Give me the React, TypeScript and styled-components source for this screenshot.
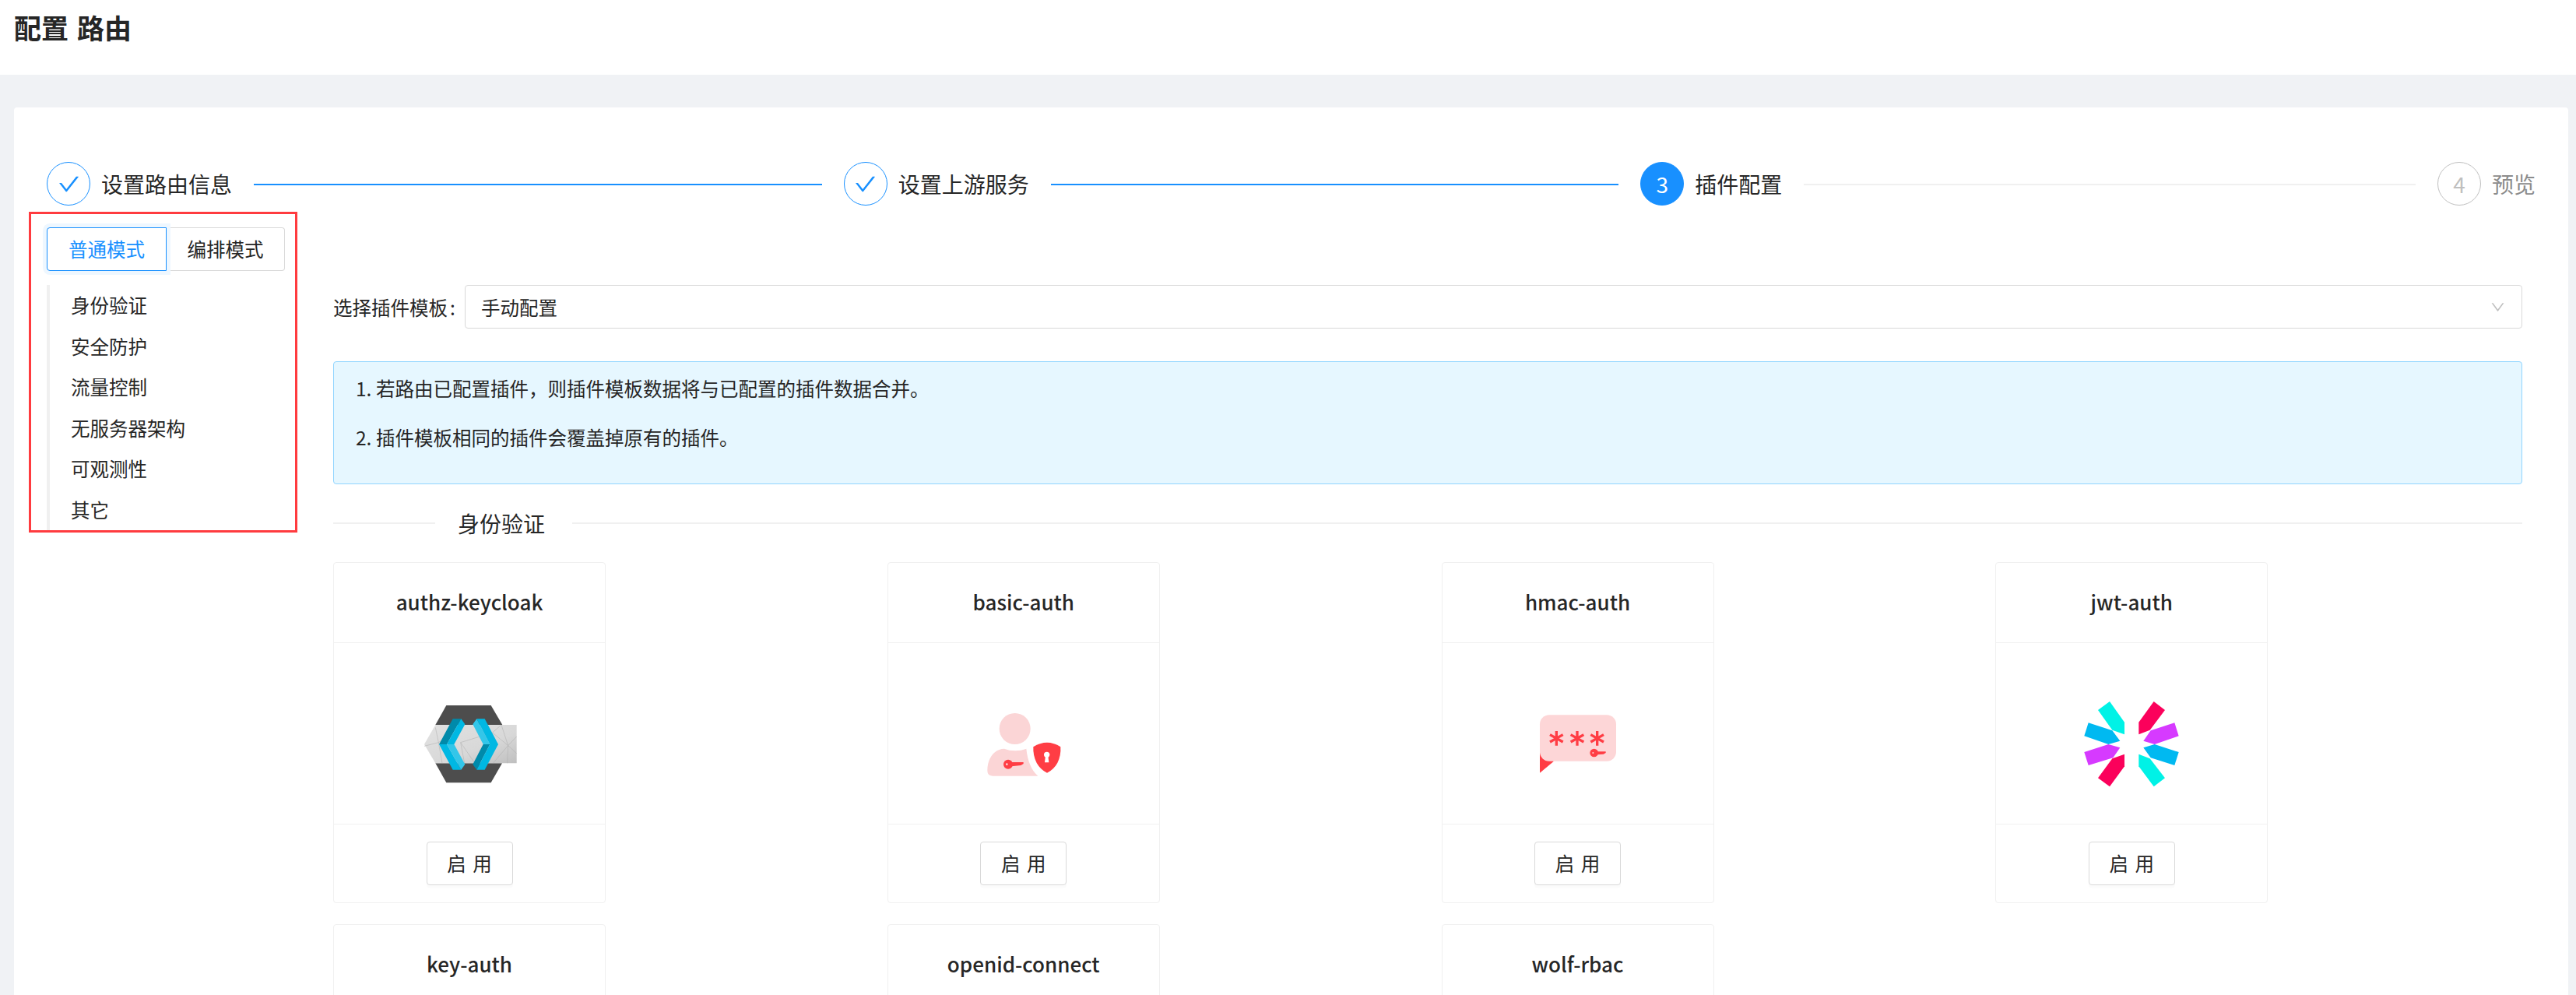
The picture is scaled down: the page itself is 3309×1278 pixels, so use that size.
import React from "react";
import styled, { createGlobalStyle } from "styled-components";

const Global = createGlobalStyle`
  html, body {
    margin: 0;
    height: 1278px;
    overflow: hidden;
    background: #f0f2f5;
  }
  * { box-sizing: border-box; }
  body {
    font-family: "Noto Sans CJK SC", "Noto Sans", sans-serif;
    font-size: 24.5px;
    color: #262626;
  }
`;

const AntCheck = () => (
  <svg width="31" height="31" viewBox="0 0 1024 1024" fill="#1890ff">
    <path d="M912 190h-69.9c-9.8 0-19.1 4.5-25.1 12.2L404.7 724.5 207 474a32 32 0 0 0-25.1-12.2H112c-6.7 0-10.4 7.7-6.3 12.9l273.9 347c12.8 16.2 37.4 16.2 50.3 0l488.4-618.9c4.1-5.1.4-12.8-6.3-12.8z" />
  </svg>
);

const AntDown = () => (
  <svg width="21" height="21" viewBox="0 0 1024 1024" fill="#bfbfbf">
    <path d="M884 256h-75c-5.1 0-9.9 2.5-12.9 6.6L512 654.2 227.9 262.6c-3-4.1-7.8-6.6-12.9-6.6h-75c-6.5 0-10.3 7.4-6.5 12.7l352.6 486.1c12.8 17.6 39 17.6 51.7 0l352.6-486.1c3.9-5.3.1-12.7-6.4-12.7z" />
  </svg>
);

const KeycloakIcon = () => (
  <svg width="200" height="140" viewBox="9 0 600 420">
    <defs>
      <linearGradient id="kcMid" x1="0" y1="0" x2="1" y2="1">
        <stop offset="0" stopColor="#e2e2e2" />
        <stop offset="0.6" stopColor="#d8d8d8" />
        <stop offset="1" stopColor="#bfbfbf" />
      </linearGradient>
    </defs>
    <polygon points="220,75 392,75 436,150 178,150" fill="#4d4d4d" />
    <polygon points="178,298 435,298 392,373 220,373" fill="#4d4d4d" />
    <polygon points="178,150 491,150 491,298 178,298 135,225" fill="url(#kcMid)" />
    <g stroke="#adadad" strokeWidth="1.5" fill="none">
      <path d="M135 232 L190 218 L178 160 M190 218 L204 298 M190 218 L230 190" />
      <path d="M275 218 L398 180 L432 150 M275 218 L330 298 M275 218 L290 298 M398 180 L458 230" />
      <path d="M432 150 L458 230 L491 195 M458 230 L491 260 M458 230 L455 298 M458 230 L400 298" />
    </g>
    <polygon points="192,225 245,127 277,127 222,225" fill="#008aaa" />
    <polygon points="277,127 292,148 250,225 222,225" fill="#00b8e3" />
    <polygon points="192,225 222,225 277,323 245,323" fill="#00b8e3" />
    <polygon points="222,225 250,225 292,302 277,323" fill="#33c6e9" />
    <polygon points="322,148 337,127 388,225 362,225" fill="#33c6e9" />
    <polygon points="337,127 368,127 420,225 388,225" fill="#00b8e3" />
    <polygon points="322,302 362,225 388,225 337,323" fill="#008aaa" />
    <polygon points="337,323 388,225 420,225 368,323" fill="#00b8e3" />
  </svg>
);

const BasicAuthIcon = () => (
  <svg width="200" height="140" viewBox="-75 -30 600 420">
    <circle cx="191" cy="135" r="60" fill="#fbd5d6" />
    <path d="M85 295 C85 245 115 212 150 212 C175 222 210 222 235 212 C240 260 255 295 280 317 L105 317 Q85 317 85 295 Z" fill="#fbd5d6" />
    <circle cx="165" cy="272" r="18" fill="#ff3d44" />
    <circle cx="160" cy="272" r="4" fill="#fbd5d6" />
    <polygon points="178,264 224,264 224,270 214,276 178,280" fill="#ff3d44" />
    <path d="M262 205 Q315 172 367 205 C370 250 350 290 315 305 C280 290 260 250 262 205 Z" fill="#ff3d44" />
    <circle cx="314" cy="235" r="11" fill="#fff" />
    <polygon points="309,240 319,240 322,265 306,265" fill="#fff" />
  </svg>
);

const HmacIcon = () => (
  <svg width="200" height="140" viewBox="-72 -30 600 420">
    <polygon points="81,225 81,305 135,260" fill="#ff3d44" />
    <rect x="81" y="82" width="294" height="178" rx="36" fill="#fdd6d7" />
    <g stroke="#ff3d44" strokeWidth="10">
      {[145, 225, 302].map((cx) => (
        <path
          key={cx}
          d={`M${cx} 144 V200 M${cx - 25} 158 L${cx + 25} 186 M${cx + 25} 158 L${cx - 25} 186`}
        />
      ))}
    </g>
    <circle cx="290" cy="228" r="16" fill="#ff3d44" />
    <circle cx="286" cy="228" r="3" fill="#fdd6d7" />
    <polygon points="300,223 335,223 335,228 326,233 300,235" fill="#ff3d44" />
  </svg>
);

const JwtIcon = () => (
  <svg width="200" height="140" viewBox="-66 0 600 420">
    <polygon points="105,93 150,60 207,140 207,187 160,170" fill="#00f2e6" />
    <polygon points="320,60 363,93 305,170 262,187 262,140" fill="#fb015b" />
    <polygon points="68,142 160,172 190,212 145,225 52,193" fill="#00b9f1" />
    <polygon points="400,142 416,193 323,225 280,212 308,172" fill="#d63aff" />
    <polygon points="52,255 145,225 190,238 163,277 68,306" fill="#d63aff" />
    <polygon points="323,225 416,255 400,306 308,277 280,238" fill="#00b9f1" />
    <polygon points="207,263 207,310 150,388 105,355 160,280" fill="#fb015b" />
    <polygon points="262,263 305,280 363,355 320,388 262,310" fill="#00f2e6" />
  </svg>
);

const steps = [
  { title: "设置路由信息", state: "done" },
  { title: "设置上游服务", state: "done" },
  { title: "插件配置", state: "active" },
  { title: "预览", state: "wait" },
];

const categories = ["身份验证", "安全防护", "流量控制", "无服务器架构", "可观测性", "其它"];

const plugins = [
  { name: "authz-keycloak", icon: <KeycloakIcon /> },
  { name: "basic-auth", icon: <BasicAuthIcon /> },
  { name: "hmac-auth", icon: <HmacIcon /> },
  { name: "jwt-auth", icon: <JwtIcon /> },
  { name: "key-auth", icon: null },
  { name: "openid-connect", icon: null },
  { name: "wolf-rbac", icon: null },
];

const App = () => {
  return (
    <>
      <Global />
      <Header>配置 路由</Header>
      <Content>
        <Panel>
          <Steps>
            {steps.map((s, i) => (
              <Step key={s.title} $last={i === steps.length - 1}>
                <StepCircle $state={s.state}>
                  {s.state === "done" ? <AntCheck /> : i + 1}
                </StepCircle>
                <StepTitle $state={s.state}>{s.title}</StepTitle>
                {i < steps.length - 1 && <StepLine $done={s.state === "done"} />}
              </Step>
            ))}
          </Steps>

          <Columns>
            <Sidebar>
              <RedFrame />
              <ModeGroup>
                <ModeButton $active>普通模式</ModeButton>
                <ModeButton>编排模式</ModeButton>
              </ModeGroup>
              <CategoryList>
                {categories.map((c) => (
                  <CategoryItem key={c}>{c}</CategoryItem>
                ))}
              </CategoryList>
            </Sidebar>

            <Main>
              <FormRow>
                <FormLabel>选择插件模板<Colon>:</Colon></FormLabel>
                <Select>
                  手动配置
                  <AntDown />
                </Select>
              </FormRow>

              <Notice>
                <NoticeLine>1. 若路由已配置插件，则插件模板数据将与已配置的插件数据合并。</NoticeLine>
                <NoticeLine>2. 插件模板相同的插件会覆盖掉原有的插件。</NoticeLine>
              </Notice>

              <Divider>
                <DividerText>身份验证</DividerText>
              </Divider>

              <PluginGrid>
                {plugins.map((p) => (
                  <PluginCard key={p.name}>
                    <CardHead>{p.name}</CardHead>
                    <CardBody>{p.icon}</CardBody>
                    {/* second row runs off the page, its buttons never show */}
                    {p.icon && (
                      <CardFoot>
                        <EnableButton>启用</EnableButton>
                      </CardFoot>
                    )}
                  </PluginCard>
                ))}
              </PluginGrid>
            </Main>
          </Columns>
        </Panel>
      </Content>
    </>
  );
};

// Styled Components

const Header = styled.div`
  height: 96px;
  padding-left: 18px;
  background: #fff;
  font-size: 35px;
  font-weight: 700;
  line-height: 70px;
  word-spacing: 3px;
`;

const Content = styled.div`
  padding: 42px 10px 0 18px;
`;

const Panel = styled.div`
  padding: 70px 42px 42px;
  background: #fff;
  border-radius: 4px;
`;

const Steps = styled.div`
  display: flex;
  height: 56px;
`;

const Step = styled.div<{ $last?: boolean }>`
  display: flex;
  align-items: center;
  flex: ${(p) => (p.$last ? "none" : "1")};
  margin-right: ${(p) => (p.$last ? "0" : "28px")};
`;

const StepCircle = styled.div<{ $state: string }>`
  display: flex;
  align-items: center;
  justify-content: center;
  flex: none;
  width: 56px;
  height: 56px;
  border-radius: 50%;
  font-size: 28px;
  border: 1px solid ${(p) => (p.$state === "wait" ? "#bfbfbf" : "#1890ff")};
  background: ${(p) => (p.$state === "active" ? "#1890ff" : "#fff")};
  color: ${(p) => (p.$state === "active" ? "#fff" : "#bfbfbf")};
`;

const StepTitle = styled.div<{ $state: string }>`
  flex: none;
  margin-left: 14px;
  font-size: 28px;
  line-height: 56px;
  color: ${(p) => (p.$state === "wait" ? "#8c8c8c" : "#262626")};
`;

const StepLine = styled.div<{ $done: boolean }>`
  flex: 1;
  height: 2px;
  margin: 2px 0 0 28px;
  background: ${(p) => (p.$done ? "#1890ff" : "#f0f0f0")};
`;

const Columns = styled.div`
  display: flex;
  align-items: flex-start;
`;

const Sidebar = styled.div`
  position: relative;
  flex: none;
  width: 306px;
  margin-top: 28px;
`;

const RedFrame = styled.div`
  position: absolute;
  inset: -20px -16px -3px -23px;
  border: 3px solid #ff3b3f;
  pointer-events: none;
`;

const ModeGroup = styled.div`
  display: flex;
  height: 56px;
`;

const ModeButton = styled.div<{ $active?: boolean }>`
  position: relative;
  z-index: ${(p) => (p.$active ? 1 : 0)};
  width: ${(p) => (p.$active ? "154px" : "152px")};
  border: 1px solid ${(p) => (p.$active ? "#1890ff" : "#d9d9d9")};
  border-left-width: ${(p) => (p.$active ? "1px" : "0")};
  border-radius: ${(p) => (p.$active ? "4px 0 0 4px" : "0 4px 4px 0")};
  color: ${(p) => (p.$active ? "#1890ff" : "#262626")};
  box-shadow: ${(p) => (p.$active ? "0 0 0 5px #eef7ff" : "none")};
  background: #fff;
  text-align: center;
  line-height: 54px;
`;

const CategoryList = styled.div`
  margin-top: 18px;
  border-left: 4px solid #f0f0f0;
`;

const CategoryItem = styled.div`
  height: 52.5px;
  padding-left: 27px;
  line-height: 52.5px;
`;

const Main = styled.div`
  flex: 1;
  min-width: 0;
  margin-left: 62px;
  padding: 102px 17px 0 0;
`;

const FormRow = styled.div`
  display: flex;
  align-items: center;
`;

const FormLabel = styled.div`
  flex: none;
  width: 169px;
`;

const Colon = styled.span`
  margin-left: 3px;
`;

const Select = styled.div`
  display: flex;
  align-items: center;
  justify-content: space-between;
  flex: 1;
  height: 56px;
  padding: 0 20px;
  border: 1px solid #d9d9d9;
  border-radius: 4px;
`;

const Notice = styled.div`
  margin-top: 42px;
  padding: 15px 28px;
  background: #e6f7ff;
  border: 1px solid #91d5ff;
  border-radius: 4px;
`;

const NoticeLine = styled.p`
  margin: 0 0 24.5px;
  line-height: 38.5px;
`;

const Divider = styled.div`
  display: flex;
  align-items: center;
  margin-top: 28px;
  height: 44px;
  &::before {
    content: "";
    width: 131px;
    height: 2px;
    background: #f0f0f0;
  }
  &::after {
    content: "";
    flex: 1;
    height: 2px;
    background: #f0f0f0;
  }
`;

const DividerText = styled.span`
  padding: 0 35px 0 29px;
  font-size: 28px;
  line-height: 44px;
`;

const PluginGrid = styled.div`
  display: grid;
  grid-template-columns: repeat(4, 711.75px);
  row-gap: 27px;
  margin-top: 28px;
`;

const PluginCard = styled.div`
  width: 350px;
  min-height: 438px;
  border: 1px solid #f0f0f0;
  border-radius: 4px;
  background: #fff;
`;

const CardHead = styled.div`
  height: 103px;
  border-bottom: 1px solid #f0f0f0;
  text-align: center;
  font-size: 26px;
  font-weight: 500;
  line-height: 100px;
`;

const CardBody = styled.div`
  display: flex;
  align-items: center;
  justify-content: center;
  height: 233px;
  padding-top: 18px;
  border-bottom: 1px solid #f0f0f0;
`;

const CardFoot = styled.div`
  display: flex;
  justify-content: center;
  padding-top: 22px;
`;

const EnableButton = styled.div`
  width: 111px;
  height: 56px;
  border: 1px solid #d9d9d9;
  border-radius: 4px;
  background: #fff;
  box-shadow: 0 3.5px 0 rgba(0, 0, 0, 0.015);
  text-align: center;
  line-height: 53px;
  letter-spacing: 0.34em;
  text-indent: 0.34em;
`;

export default App;
